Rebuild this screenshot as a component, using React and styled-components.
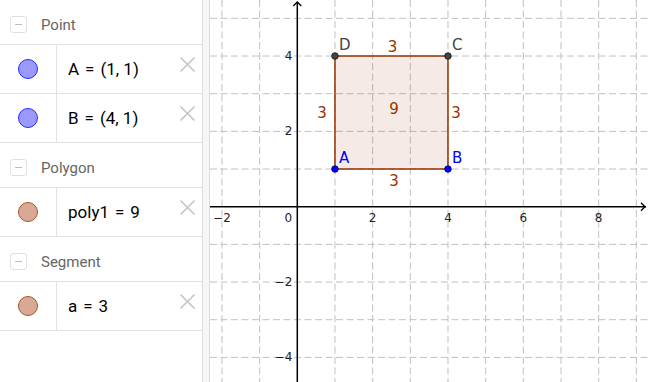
import React from "react";
import styled, { createGlobalStyle } from "styled-components";

const GlobalStyle = createGlobalStyle`
  html, body {
    margin: 0;
    padding: 0;
    background: #fff;
  }
  body {
    font-family: Roboto, "Liberation Sans", sans-serif;
  }
`;

const Page = styled.div`
  display: flex;
  width: 648px;
  height: 382px;
  overflow: hidden;
`;

const AlgebraPanel = styled.div`
  width: 202px;
  flex: none;
  display: flex;
  flex-direction: column;
`;

const GroupHeader = styled.div`
  height: 45px;
  display: flex;
  align-items: center;
  gap: 14px;
  padding: 5px 0 0 10px;
  box-sizing: border-box;
  border-bottom: 1px solid #e2e2e2;
  font-size: 15px;
  color: #666;
  flex: none;
`;

const Collapse = styled.span`
  width: 15px;
  height: 15px;
  border: 1px solid #e0e0e0;
  border-radius: 3px;
  display: flex;
  align-items: center;
  justify-content: center;
  &::after {
    content: "";
    width: 7px;
    height: 1px;
    background: #bbb;
  }
`;

const Row = styled.div`
  height: 48px;
  display: flex;
  border-bottom: 1px solid #e2e2e2;
  flex: none;
`;

const MarbleCell = styled.div`
  width: 56px;
  flex: none;
  display: flex;
  align-items: center;
  justify-content: center;
  border-right: 1px solid #e2e2e2;
`;

const Marble = styled.span`
  width: 18px;
  height: 18px;
  border-radius: 50%;
  background: ${(p) => p.fill};
  border: 1px solid ${(p) => p.stroke};
`;

const Definition = styled.div`
  flex: 1;
  display: flex;
  align-items: center;
  justify-content: space-between;
  padding: 0 6px 1px 11px;
  font-size: 17px;
  color: #000;
`;

const Eq = styled.span`
  margin: 0 6px;
`;

const Remove = styled.svg`
  width: 17px;
  height: 17px;
  align-self: flex-start;
  margin-top: 11px;
`;

const Splitter = styled.div`
  width: 6px;
  flex: none;
  background: #f6f6f6;
  border-left: 1px solid #dcdcdc;
  border-right: 1px solid #dcdcdc;
`;

const Graphics = styled.div`
  flex: 1;
  position: relative;
`;

const groups = [
  {
    title: "Point",
    items: [
      { name: "A", value: "(1,\u00a01)", fill: "#9999ff", stroke: "#2a2aff" },
      { name: "B", value: "(4,\u00a01)", fill: "#9999ff", stroke: "#2a2aff" },
    ],
  },
  {
    title: "Polygon",
    items: [{ name: "poly1", value: "9", fill: "#d8aa96", stroke: "#a8542c" }],
  },
  {
    title: "Segment",
    items: [{ name: "a", value: "3", fill: "#d8aa96", stroke: "#a8542c" }],
  },
];

const W = 438;
const H = 382;
const OX = 87.3;
const OY = 206.7;
const U = 37.67;
const px = (x) => OX + x * U;
const py = (y) => OY - y * U;

const BROWN = "#993300";

const Plot = () => {
  const vlines = [];
  for (let k = -2; k <= 9; k++) if (k !== 0) vlines.push(px(k));
  const hlines = [];
  for (let k = -4; k <= 5; k++) if (k !== 0) hlines.push(py(k));
  const axisFont = { fontFamily: "'DejaVu Sans', sans-serif", fontSize: 12, fill: "#222" };
  const labelFont = { fontFamily: "'DejaVu Sans', sans-serif", fontSize: 15 };
  return (
    <svg width={W} height={H} style={{ display: "block" }}>
      <g stroke="#c0c0c0" strokeWidth="1" strokeDasharray="7 3.5">
        {vlines.map((x) => (
          <line key={"v" + x} x1={x} y1={0} x2={x} y2={H} />
        ))}
        {hlines.map((y) => (
          <line key={"h" + y} x1={0} y1={y} x2={W} y2={y} />
        ))}
      </g>
      <line x1={0} y1={OY} x2={W - 2} y2={OY} stroke="#000" strokeWidth="1.5" />
      <line x1={OX} y1={H} x2={OX} y2={2} stroke="#000" strokeWidth="1.5" />
      <path d={`M${W - 7} ${OY - 4} L${W - 3} ${OY} L${W - 7} ${OY + 4}`} fill="none" stroke="#000" strokeWidth="1.3" />
      <path d={`M${OX - 4} 6 L${OX} 2 L${OX + 4} 6`} fill="none" stroke="#000" strokeWidth="1.3" />

      <g style={axisFont} textAnchor="middle">
        <text x={px(-2)} y={OY + 15}>−2</text>
        <text x={OX - 9} y={OY + 15}>0</text>
        <text x={px(2)} y={OY + 15}>2</text>
        <text x={px(4)} y={OY + 15}>4</text>
        <text x={px(6)} y={OY + 15}>6</text>
        <text x={px(8)} y={OY + 15}>8</text>
      </g>
      <g style={axisFont} textAnchor="end">
        <text x={OX - 5} y={py(4) + 4}>4</text>
        <text x={OX - 5} y={py(2) + 4}>2</text>
        <text x={OX - 5} y={py(-2) + 4}>−2</text>
        <text x={OX - 5} y={py(-4) + 4}>−4</text>
      </g>

      <polygon
        points={`${px(1)},${py(1)} ${px(4)},${py(1)} ${px(4)},${py(4)} ${px(1)},${py(4)}`}
        fill="rgba(153,51,0,0.1)"
        stroke={BROWN}
        strokeWidth="1.5"
      />

      <g style={labelFont} fill={BROWN} textAnchor="middle">
        <text x={px(2.5) + 1} y={py(4) - 4}>3</text>
        <text x={px(2.5) + 2.5} y={py(1) + 17}>3</text>
        <text x={px(1) - 13} y={py(2.5) + 5}>3</text>
        <text x={px(4) + 8} y={py(2.5) + 5}>3</text>
        <text x={px(2.5) + 2.5} y={py(2.5) + 1}>9</text>
      </g>

      <circle cx={px(1)} cy={py(4)} r="3.3" fill="#444" stroke="#111" strokeWidth="0.8" />
      <circle cx={px(4)} cy={py(4)} r="3.3" fill="#444" stroke="#111" strokeWidth="0.8" />
      <circle cx={px(1)} cy={py(1)} r="3.3" fill="#0000ff" stroke="#000066" strokeWidth="0.8" />
      <circle cx={px(4)} cy={py(1)} r="3.3" fill="#0000ff" stroke="#000066" strokeWidth="0.8" />

      <g style={labelFont}>
        <text x={px(1) + 4} y={py(4) - 6} fill="#444">D</text>
        <text x={px(4) + 4} y={py(4) - 6} fill="#444">C</text>
        <text x={px(1) + 4} y={py(1) - 6} fill="#0000ff">A</text>
        <text x={px(4) + 4} y={py(1) - 6} fill="#0000ff">B</text>
      </g>
    </svg>
  );
};

const App = () => (
  <Page>
    <GlobalStyle />
    <AlgebraPanel>
      {groups.map((g) => (
        <React.Fragment key={g.title}>
          <GroupHeader>
            <Collapse />
            {g.title}
          </GroupHeader>
          {g.items.map((it) => (
            <Row key={it.name}>
              <MarbleCell>
                <Marble fill={it.fill} stroke={it.stroke} />
              </MarbleCell>
              <Definition>
                <span>
                  {it.name}
                  <Eq>=</Eq>
                  {it.value}
                </span>
                <Remove viewBox="0 0 17 17">
                  <path d="M1.5 1.5 L15.5 15.5 M15.5 1.5 L1.5 15.5" stroke="#c4c4c4" strokeWidth="1.6" fill="none" />
                </Remove>
              </Definition>
            </Row>
          ))}
        </React.Fragment>
      ))}
    </AlgebraPanel>
    <Splitter />
    <Graphics>
      <Plot />
    </Graphics>
  </Page>
);

export default App;
